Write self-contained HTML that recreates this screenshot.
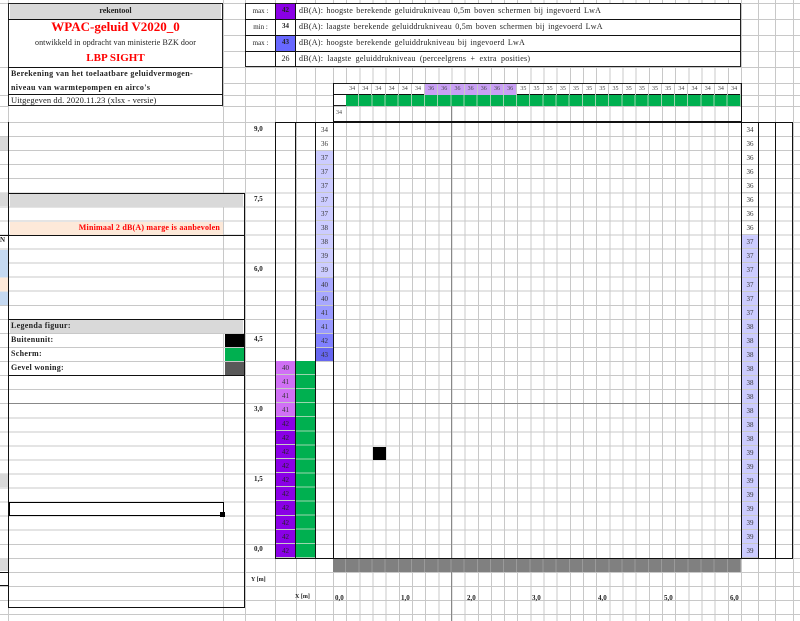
<!DOCTYPE html>
<html><head><meta charset="utf-8"><style>
*{margin:0;padding:0;box-sizing:border-box}
body{width:800px;height:621px;position:relative;overflow:hidden;background:#fff;font-family:"Liberation Serif",serif;color:#222}
.a{position:absolute}
.hl{position:absolute;height:1px;background:#c8c8c8}
.vl{position:absolute;width:1px;background:#c8c8c8}
.k{position:absolute;background:#111}
.col{position:absolute;display:flex;flex-direction:column}
.col div{height:14.06px;line-height:14px;font-size:7px;text-align:center;border-bottom:1px solid #c8c8c8;color:#333}
.row{position:absolute;display:flex}
.row div{flex:1;text-align:center;font-size:6px;line-height:11px;border-right:1px solid #c8c8c8;color:#444}
.t{position:absolute;font-size:8px;white-space:nowrap}
.b{font-weight:bold}
.lab{position:absolute;font-size:7px;font-weight:bold;color:#222}
</style></head><body>
<div class="a" style="left:0;top:122px;width:800px;height:499px;background:repeating-linear-gradient(to bottom,#c8c8c8 0 1px,transparent 1px 14.06px)"></div>
<div class="a" style="left:333px;top:0;width:409px;height:621px;background:repeating-linear-gradient(to right,#c8c8c8 0 1px,transparent 1px 13.16px)"></div>
<div class="vl" style="left:8px;top:0;height:621px"></div>
<div class="vl" style="left:223px;top:0;height:621px"></div>
<div class="vl" style="left:245px;top:0;height:621px"></div>
<div class="vl" style="left:275px;top:0;height:621px"></div>
<div class="vl" style="left:296px;top:0;height:621px"></div>
<div class="vl" style="left:315px;top:0;height:621px"></div>
<div class="vl" style="left:758px;top:0;height:621px"></div>
<div class="vl" style="left:775px;top:0;height:621px"></div>
<div class="vl" style="left:793px;top:0;height:621px"></div>
<div class="hl" style="left:0;top:3px;width:800px"></div>
<div class="hl" style="left:222px;top:19px;width:578px"></div>
<div class="hl" style="left:222px;top:35px;width:578px"></div>
<div class="hl" style="left:222px;top:51px;width:578px"></div>
<div class="hl" style="left:222px;top:67px;width:578px"></div>
<div class="hl" style="left:222px;top:83px;width:578px"></div>
<div class="hl" style="left:222px;top:95px;width:578px"></div>
<div class="hl" style="left:222px;top:106px;width:578px"></div>
<div class="hl" style="left:0;top:67px;width:8px"></div>
<div class="hl" style="left:0;top:95px;width:8px"></div>
<div class="hl" style="left:0;top:106px;width:8px"></div>
<div class="a" style="left:451px;top:106px;width:1px;height:515px;background:#888"></div>
<div class="a" style="left:333px;top:403px;width:408px;height:1px;background:#888"></div>
<div class="a" style="left:8px;top:403px;width:237px;height:1px;background:#888"></div>

<div class="a" style="left:8px;top:3px;width:215px;height:103px;border:1px solid #222;background:#fff"></div>
<div class="a" style="left:10px;top:4px;width:211px;height:15px;background:#d9d9d9"></div>
<div class="t b" style="left:8px;width:215px;top:6px;text-align:center">rekentool</div>
<div class="k" style="left:8px;top:19px;width:215px;height:1px"></div>
<div class="t b" style="left:8px;width:215px;top:19px;text-align:center;color:#f00;font-size:13px;line-height:16px">WPAC-geluid V2020_0</div>
<div class="t" style="left:8px;width:215px;top:38px;text-align:center;font-size:8px;letter-spacing:0.1px">ontwikkeld in opdracht van ministerie BZK door</div>
<div class="t b" style="left:8px;width:215px;top:52px;text-align:center;color:#f00;font-size:11px">LBP SIGHT</div>
<div class="k" style="left:8px;top:67px;width:215px;height:1px"></div>
<div class="t b" style="left:11px;top:69px;font-size:8px;letter-spacing:0.35px">Berekening van het toelaatbare geluidvermogen-</div>
<div class="t b" style="left:11px;top:83px;font-size:8px;letter-spacing:0.35px">niveau van warmtepompen en airco's</div>
<div class="k" style="left:8px;top:94px;width:215px;height:1px"></div>
<div class="t" style="left:11px;top:95px;font-size:8.5px;letter-spacing:0.1px">Uitgegeven dd. 2020.11.23 (xlsx - versie)</div>

<div class="a" style="left:245px;top:3px;width:496px;height:64px;border:1px solid #222;background:#fff"></div>
<div class="k" style="left:245px;top:19px;width:496px;height:1px"></div>
<div class="k" style="left:245px;top:35px;width:496px;height:1px"></div>
<div class="k" style="left:245px;top:51px;width:496px;height:1px"></div>
<div class="k" style="left:275px;top:3px;width:1px;height:64px"></div>
<div class="k" style="left:295px;top:3px;width:1px;height:64px"></div>
<div class="a" style="left:276px;top:4px;width:19px;height:15px;background:#8a00e6"></div>
<div class="a" style="left:276px;top:36px;width:19px;height:15px;background:#6868ff"></div>
<div class="t" style="left:246px;width:29px;top:7px;text-align:center;font-size:7px">max :</div>
<div class="t" style="left:246px;width:29px;top:23px;text-align:center;font-size:7px">min :</div>
<div class="t" style="left:246px;width:29px;top:39px;text-align:center;font-size:7px">max :</div>
<div class="t b" style="left:276px;width:19px;top:6px;text-align:center;font-size:7px">42</div>
<div class="t b" style="left:276px;width:19px;top:22px;text-align:center;font-size:7px">34</div>
<div class="t b" style="left:276px;width:19px;top:38px;text-align:center;font-size:7px">43</div>
<div class="t" style="left:276px;width:19px;top:54px;text-align:center;font-size:8px">26</div>
<div class="t" style="left:299px;top:6px;font-size:8px;letter-spacing:0.25px;word-spacing:1px">dB(A): hoogste berekende geluidrukniveau 0,5m boven schermen bij ingevoerd LwA</div>
<div class="t" style="left:299px;top:22px;font-size:8px;letter-spacing:0.25px;word-spacing:1px">dB(A): laagste berekende geluiddrukniveau 0,5m boven schermen bij ingevoerd LwA</div>
<div class="t" style="left:299px;top:38px;font-size:8px;letter-spacing:0.25px;word-spacing:1px">dB(A): hoogste berekende geluiddrukniveau bij ingevoerd LwA</div>
<div class="t" style="left:299px;top:54px;font-size:8px;letter-spacing:0.25px;word-spacing:2px">dB(A): laagste geluiddrukniveau (perceelgrens + extra posities)</div>

<div class="a" style="left:333px;top:83px;width:408px;height:23px;border:1px solid #222;background:#fff"></div>
<div class="k" style="left:333px;top:94px;width:408px;height:1px"></div>
<div class="row" style="left:346px;top:84px;width:395px;height:11px">
<div>34</div><div>34</div><div>34</div><div>34</div><div>34</div><div>34</div>
<div style="background:#c9a0f5">36</div><div style="background:#c9a0f5">36</div><div style="background:#c9a0f5">36</div><div style="background:#c9a0f5">36</div><div style="background:#c9a0f5">36</div><div style="background:#c9a0f5">36</div><div style="background:#c9a0f5">36</div>
<div>35</div><div>35</div><div>35</div><div>35</div><div>35</div><div>35</div><div>35</div><div>35</div><div>35</div><div>35</div><div>35</div><div>35</div>
<div>34</div><div>34</div><div>34</div><div>34</div><div>34</div></div>
<div class="a" style="left:346px;top:95px;width:395px;height:11px;background:repeating-linear-gradient(to right,#00b050 0 12.16px,#9bd6ae 12.16px 13.16px)"></div>
<div class="t" style="left:336px;top:110px;font-size:6px;color:#444">34</div>

<div class="k" style="left:333px;top:121px;width:409px;height:2px"></div>
<div class="k" style="left:333px;top:83px;width:1px;height:475px"></div>
<div class="k" style="left:275px;top:122px;width:1px;height:436px"></div>
<div class="k" style="left:295px;top:122px;width:1px;height:436px"></div>
<div class="k" style="left:315px;top:122px;width:1px;height:436px"></div>
<div class="k" style="left:275px;top:122px;width:58px;height:1px"></div>
<div class="k" style="left:275px;top:558px;width:518px;height:1px"></div>
<div class="k" style="left:741px;top:83px;width:1px;height:475px"></div>
<div class="k" style="left:758px;top:122px;width:1px;height:436px"></div>
<div class="k" style="left:775px;top:122px;width:1px;height:436px"></div>
<div class="k" style="left:792px;top:122px;width:1px;height:436px"></div>
<div class="k" style="left:741px;top:122px;width:52px;height:1px"></div>

<div class="col" style="left:316px;top:123px;width:17px">
<div>34</div><div>36</div><div style="background:#ccf">37</div><div style="background:#ccf">37</div><div style="background:#ccf">37</div><div style="background:#ccf">37</div><div style="background:#ccf">37</div><div style="background:#ccf">38</div><div style="background:#ccf">38</div><div style="background:#ccf">39</div><div style="background:#ccf">39</div><div style="background:#a8a8ff">40</div><div style="background:#a8a8ff">40</div><div style="background:#9999ff">41</div><div style="background:#9999ff">41</div><div style="background:#8080ff">42</div><div style="background:#6666f0">43</div></div>

<div class="col" style="left:276px;top:361px;width:19px">
<div style="background:#d070f5">40</div><div style="background:#d070f5">41</div><div style="background:#d070f5">41</div><div style="background:#d070f5">41</div>
<div style="background:#8a00e6;color:#222">42</div><div style="background:#8a00e6;color:#222">42</div><div style="background:#8a00e6;color:#222">42</div><div style="background:#8a00e6;color:#222">42</div><div style="background:#8a00e6;color:#222">42</div><div style="background:#8a00e6;color:#222">42</div><div style="background:#8a00e6;color:#222">42</div><div style="background:#8a00e6;color:#222">42</div><div style="background:#8a00e6;color:#222">42</div><div style="background:#8a00e6;color:#222">42</div></div>
<div class="a" style="left:296px;top:361px;width:19px;height:197px;background:repeating-linear-gradient(to bottom,#00b050 0 13.06px,#9bd6ae 13.06px 14.06px)"></div>

<div class="col" style="left:742px;top:123px;width:16px">
<div>34</div><div>36</div><div>36</div><div>36</div><div>36</div><div>36</div><div>36</div><div>36</div>
<div style="background:#ccf">37</div><div style="background:#ccf">37</div><div style="background:#ccf">37</div><div style="background:#ccf">37</div><div style="background:#ccf">37</div><div style="background:#ccf">37</div>
<div style="background:#ccf">38</div><div style="background:#ccf">38</div><div style="background:#ccf">38</div><div style="background:#ccf">38</div><div style="background:#ccf">38</div><div style="background:#ccf">38</div><div style="background:#ccf">38</div><div style="background:#ccf">38</div><div style="background:#ccf">38</div>
<div style="background:#ccf">39</div><div style="background:#ccf">39</div><div style="background:#ccf">39</div><div style="background:#ccf">39</div><div style="background:#ccf">39</div><div style="background:#ccf">39</div><div style="background:#ccf">39</div><div style="background:#ccf">39</div></div>

<div class="a" style="left:373px;top:447px;width:13px;height:13px;background:#000"></div>
<div class="a" style="left:333px;top:559px;width:408px;height:13px;background:repeating-linear-gradient(to right,#808080 0 12.16px,#9a9a9a 12.16px 13.16px)"></div>

<div class="lab" style="left:254px;top:125px">9,0</div>
<div class="lab" style="left:254px;top:195px">7,5</div>
<div class="lab" style="left:254px;top:265px">6,0</div>
<div class="lab" style="left:254px;top:335px">4,5</div>
<div class="lab" style="left:254px;top:405px">3,0</div>
<div class="lab" style="left:254px;top:475px">1,5</div>
<div class="lab" style="left:254px;top:545px">0,0</div>
<div class="lab" style="left:251px;top:577px;font-size:6px">Y [m]</div>
<div class="lab" style="left:295px;top:594px;font-size:6px">X [m]</div>
<div class="lab" style="left:335px;top:594px">0,0</div>
<div class="lab" style="left:401px;top:594px">1,0</div>
<div class="lab" style="left:467px;top:594px">2,0</div>
<div class="lab" style="left:532px;top:594px">3,0</div>
<div class="lab" style="left:598px;top:594px">4,0</div>
<div class="lab" style="left:664px;top:594px">5,0</div>
<div class="lab" style="left:730px;top:594px">6,0</div>

<div class="a" style="left:0;top:137px;width:8px;height:13px;background:#d9d9d9"></div>
<div class="a" style="left:0;top:193px;width:8px;height:13px;background:#d9d9d9"></div>
<div class="t b" style="left:0;top:236px;font-size:7px">N</div>
<div class="a" style="left:0;top:250px;width:8px;height:27px;background:#c5d9f1"></div>
<div class="a" style="left:0;top:278px;width:8px;height:13px;background:#fde9d9"></div>
<div class="a" style="left:0;top:292px;width:8px;height:13px;background:#c5d9f1"></div>
<div class="a" style="left:0;top:474px;width:8px;height:13px;background:#d9d9d9"></div>
<div class="a" style="left:0;top:558px;width:8px;height:13px;background:#d9d9d9"></div>
<div class="k" style="left:0;top:235px;width:8px;height:1px"></div>
<div class="k" style="left:0;top:572px;width:8px;height:1px"></div>
<div class="k" style="left:0;top:585px;width:8px;height:1px"></div>

<div class="k" style="left:8px;top:122px;width:1px;height:486px"></div>
<div class="k" style="left:244px;top:193px;width:1px;height:415px"></div>
<div class="k" style="left:8px;top:607px;width:237px;height:1px"></div>
<div class="k" style="left:8px;top:193px;width:237px;height:1px"></div>
<div class="a" style="left:10px;top:194px;width:233px;height:13px;background:#d9d9d9"></div>
<div class="a" style="left:10px;top:222px;width:213px;height:13px;background:#fde9d9"></div>
<div class="t b" style="left:10px;width:210px;top:223px;text-align:right;color:#f00;font-size:8px;letter-spacing:0.2px">Minimaal 2 dB(A) marge is aanbevolen</div>
<div class="k" style="left:8px;top:235px;width:237px;height:1px"></div>

<div class="k" style="left:8px;top:319px;width:237px;height:1px"></div>
<div class="a" style="left:10px;top:320px;width:233px;height:13px;background:#d9d9d9"></div>
<div class="t b" style="left:11px;top:321px;font-size:8px;letter-spacing:0.3px">Legenda figuur:</div>
<div class="t b" style="left:11px;top:335px;font-size:8px;letter-spacing:0.3px">Buitenunit:</div>
<div class="t b" style="left:11px;top:349px;font-size:8px;letter-spacing:0.3px">Scherm:</div>
<div class="t b" style="left:11px;top:363px;font-size:8px;letter-spacing:0.3px">Gevel woning:</div>
<div class="a" style="left:225px;top:334px;width:19px;height:13px;background:#000"></div>
<div class="a" style="left:225px;top:348px;width:19px;height:13px;background:#00b050"></div>
<div class="a" style="left:225px;top:362px;width:19px;height:13px;background:#595959"></div>
<div class="k" style="left:8px;top:375px;width:237px;height:1px"></div>

<div class="a" style="left:9px;top:502px;width:215px;height:14px;border:1px solid #000"></div>
<div class="a" style="left:220px;top:512px;width:5px;height:5px;background:#000"></div>
</body></html>
